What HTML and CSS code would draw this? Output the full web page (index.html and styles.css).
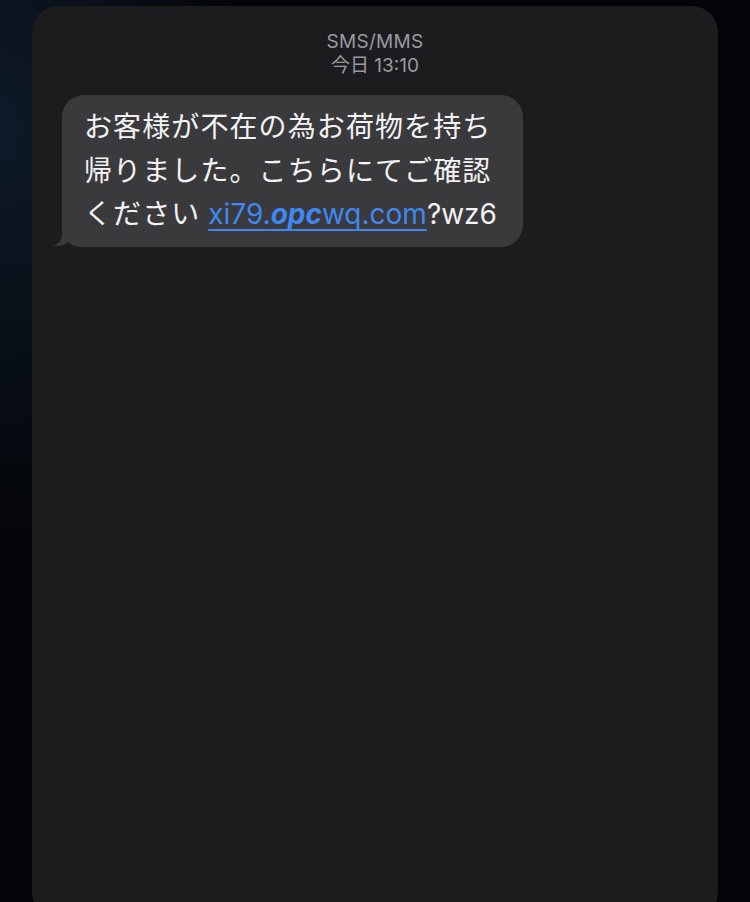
FILE: index.html
```html
<!DOCTYPE html>
<html lang="ja">
<head>
<meta charset="utf-8">
<title>SMS/MMS</title>
<link rel="stylesheet" href="styles.css">
</head>
<body>
<div class="screen">
  <div class="card">
    <div class="meta">
      <div class="service">SMS/MMS</div>
      <div class="time">今日 13:10</div>
    </div>
    <div class="thread">
      <div class="bubble">
        <p class="text">お客様が不在の為お荷物を持ち<br>帰りました。こちらにてご確認<br>ください<span class="latin"> <a class="link" href="#">xi79.<span class="odd">opc</span>wq.com</a>?wz6</span></p>
        <svg class="tail" width="34" height="24" viewBox="0 0 34 24" aria-hidden="true">
          <path d="M10 0 L10 12 C10 17.5 6.5 21 1 22.6 C6.5 23.6 12.5 22.4 16.5 19.2 C19.5 22.2 24 24 30 24 L34 24 L34 0 Z" fill="#3a3a3c"/>
        </svg>
      </div>
    </div>
  </div>
</div>
</body>
</html>
```

FILE: styles.css
```css
html, body {
  margin: 0;
  padding: 0;
  height: 100%;
  overflow: hidden;
}

body {
  background:
    radial-gradient(ellipse 260px 420px at 0px 130px, rgba(18, 34, 52, 0.75), rgba(18, 34, 52, 0) 100%),
    #030407;
  font-family: Inter, "Noto Sans CJK JP", sans-serif;
}

.screen {
  padding: 6px 32px 0;
}

.card {
  height: 912px;
  background: #1c1c1e;
  border-radius: 26px;
  padding-top: 24px;
  box-sizing: border-box;
}

.meta {
  text-align: center;
  color: #9a9a9f;
  font-size: 19px;
  line-height: 24px;
}

.service {
  letter-spacing: 0.3px;
}

.thread {
  padding: 17px 0 0 30px;
}

.bubble {
  position: relative;
  width: 461px;
  box-sizing: border-box;
  background: #3a3a3c;
  border-radius: 22px;
  padding: 11px 0 10px 22px;
}

.text {
  margin: 0;
  color: #f2f2f4;
  font-family: Inter, "Noto Sans CJK JP", sans-serif;
  font-size: 28px;
  line-height: 43.5px;
  letter-spacing: 1.1px;
  position: relative;
  z-index: 1;
}

.latin {
  font-size: 28px;
  letter-spacing: 0;
}

.link {
  color: #3f88f2;
  text-decoration: underline;
  text-decoration-thickness: 2px;
  text-underline-offset: 5px;
  text-decoration-skip-ink: none;
}

.odd {
  font-weight: 700;
  font-style: italic;
}

.tail {
  position: absolute;
  left: -10px;
  bottom: 0;
  display: block;
}
```
